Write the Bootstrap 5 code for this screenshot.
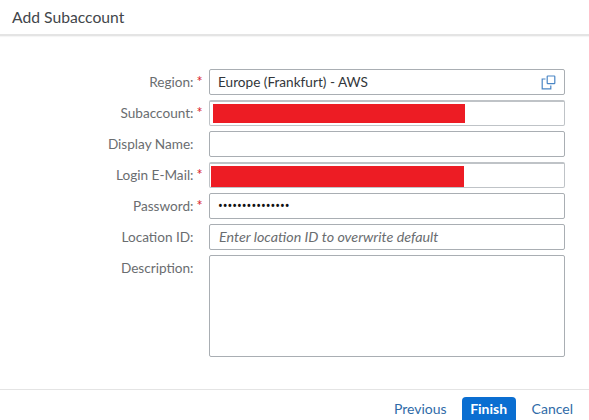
<!DOCTYPE html>
<html lang="en">
<head>
<meta charset="utf-8">
<title>Add Subaccount</title>
<link href="https://cdn.jsdelivr.net/npm/bootstrap@5.3.0/dist/css/bootstrap.min.css" rel="stylesheet">
<style>
html,body{height:420px;overflow:hidden;}
body{font-family:Lato,"Noto Sans",sans-serif;font-size:13.6px;color:#32363a;background:#fff;}
.dlg{height:420px;}
.dlg-head{height:36px;padding:0 12px;font-size:15.7px;line-height:35px;border-bottom:2px solid #e4e4e4;box-shadow:0 1px 1px rgba(0,0,0,.04);color:#42464a;}
.dlg-form{padding-top:33px;gap:5px;padding-right:24px;}
.frow{height:26px;}
.frow-tall{height:102px;}
.flabel{width:193.5px;flex:none;padding-top:3px;line-height:20px;text-align:right;color:#6a6d70;white-space:nowrap;}
.req{width:15.5px;flex:none;padding-top:3px;line-height:20px;padding-left:3px;color:#d9262c;font-size:14.4px;}
.fbox{flex:1 1 auto;border:1px solid #a9aeb3;border-radius:2px;background:#fff;padding:0 8px;line-height:23px;color:#32363a;min-width:0;}
.fbox.mask{padding:2px 0 0 3px;border-width:2px 1px 1px 1px;border-color:#bfc3c7;}
.fbox.mask.wider{padding-left:1px;}
.redact{display:block;height:19px;background:#ed1c24;}
.redact-wide{height:21px;}
.ph{font-style:italic;color:#6a6d70;font-size:14.3px;padding-left:1px;}
.dots{font-family:"Noto Sans",sans-serif;font-size:12.7px;color:#111;}
.dlg-foot{height:31px;margin-top:auto;border-top:1px solid #e4e4e4;padding:7px 16px 0 0;flex:none;font-size:14px;}
.flink{color:#2f6ba8;line-height:24px;text-decoration:none;}
.fbtn{background:#0a6ed1;color:#fff;font-weight:700;border-radius:4px;height:30px;width:54px;text-align:center;line-height:24px;margin:0 16px 0 15px;}
</style>
</head>
<body>
<div class="dlg d-flex flex-column">
  <div class="dlg-head">Add Subaccount</div>
  <div class="dlg-form d-flex flex-column">
    <div class="frow d-flex"><div class="flabel">Region:</div><div class="req">*</div><div class="fbox d-flex justify-content-between align-items-center"><span>Europe (Frankfurt) - AWS</span>
      <svg width="15" height="15" viewBox="0 0 15 15" fill="none" stroke="#4a86c5" stroke-width="1.2"><path d="M4.5 4H1.2v9.8h8.6V10.5"/><rect x="6.2" y="1" width="7.6" height="7.6" rx=".6"/></svg></div></div>
    <div class="frow d-flex"><div class="flabel">Subaccount:</div><div class="req">*</div><div class="fbox mask"><span class="redact" style="width:252px"></span></div></div>
    <div class="frow d-flex"><div class="flabel">Display Name:</div><div class="req"></div><div class="fbox"></div></div>
    <div class="frow d-flex"><div class="flabel">Login E-Mail:</div><div class="req">*</div><div class="fbox mask wider"><span class="redact redact-wide" style="width:253px"></span></div></div>
    <div class="frow d-flex"><div class="flabel">Password:</div><div class="req">*</div><div class="fbox"><span class="dots">•••••••••••••••</span></div></div>
    <div class="frow d-flex"><div class="flabel">Location ID:</div><div class="req"></div><div class="fbox"><span class="ph">Enter location ID to overwrite default</span></div></div>
    <div class="frow-tall d-flex"><div class="flabel">Description:</div><div class="req"></div><div class="fbox"></div></div>
  </div>
  <div class="dlg-foot d-flex justify-content-end">
    <a class="flink" href="#">Previous</a>
    <div class="fbtn">Finish</div>
    <a class="flink" href="#">Cancel</a>
  </div>
</div>
<script src="https://cdn.jsdelivr.net/npm/bootstrap@5.3.0/dist/js/bootstrap.bundle.min.js"></script>
</body>
</html>
